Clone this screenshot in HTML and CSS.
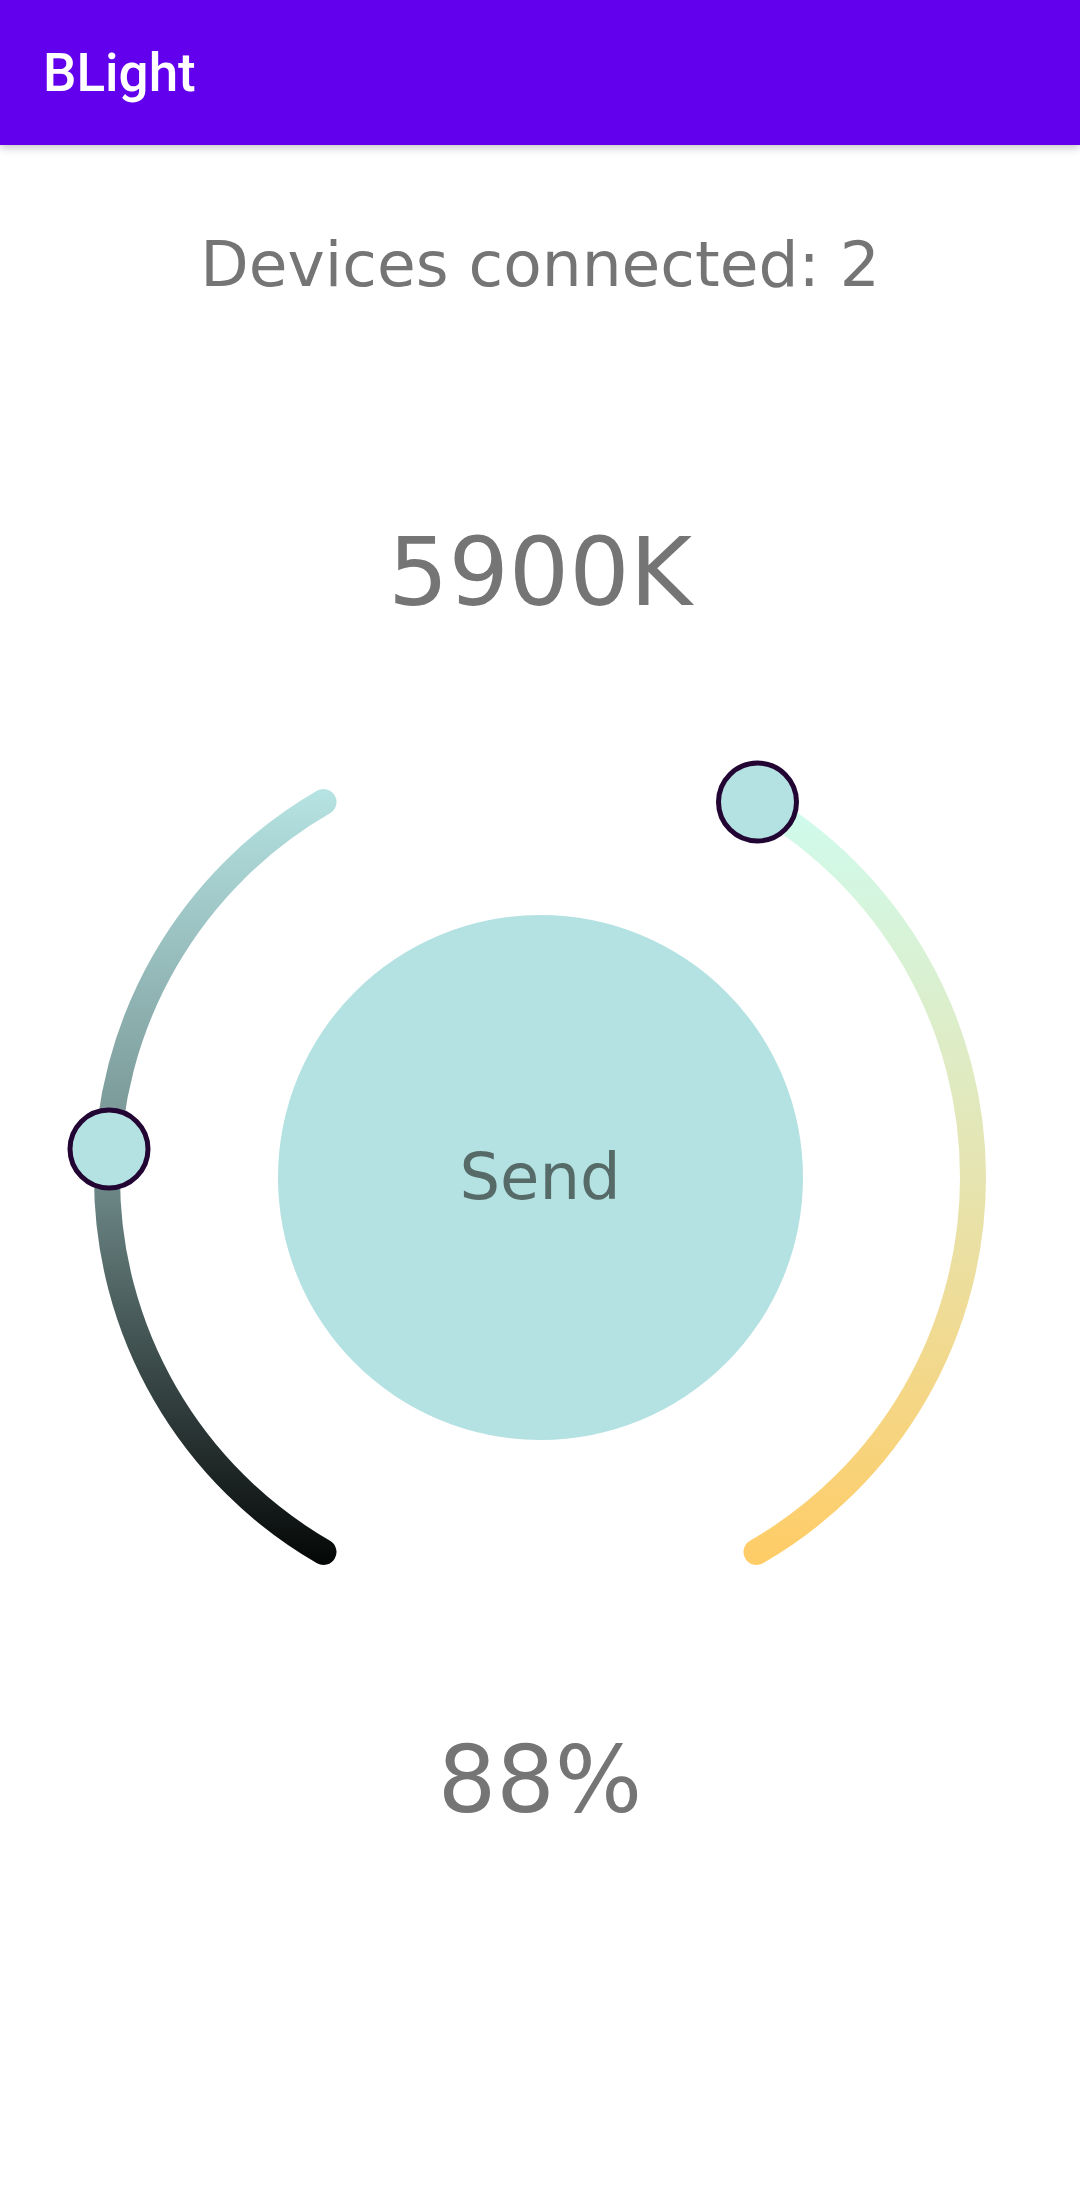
FILE: index.html
```html
<!DOCTYPE html>
<html lang="en">
<head>
<meta charset="utf-8">
<title>BLight</title>
<link rel="stylesheet" href="styles.css">
</head>
<body>
<header class="app-bar">
  <h1 class="app-title">BLight</h1>
</header>
<main class="content">
  <p class="devices">Devices connected: 2</p>
  <p class="temp">5900K</p>
  <div class="dial">
    <svg class="dial-svg" width="1080" height="880" viewBox="0 0 1080 880">
      <defs>
        <linearGradient id="gLeft" gradientUnits="userSpaceOnUse" x1="0" y1="52" x2="0" y2="828">
          <stop offset="0" stop-color="#b6e3e3"/>
          <stop offset="0.5" stop-color="#6f8b8a"/>
          <stop offset="1" stop-color="#040706"/>
        </linearGradient>
        <linearGradient id="gRight" gradientUnits="userSpaceOnUse" x1="0" y1="52" x2="0" y2="828">
          <stop offset="0" stop-color="#cefcf0"/>
          <stop offset="0.5" stop-color="#e6e4b0"/>
          <stop offset="1" stop-color="#ffcc66"/>
        </linearGradient>
      </defs>
      <path d="M 323.5 65 A 433 433 0 0 0 323.5 815" fill="none" stroke="url(#gLeft)" stroke-width="26" stroke-linecap="round"/>
      <path d="M 756.5 65 A 433 433 0 0 1 756.5 815" fill="none" stroke="url(#gRight)" stroke-width="26" stroke-linecap="round"/>
      <circle cx="109" cy="412" r="39" fill="#b4e1e2" stroke="#220533" stroke-width="5"/>
      <circle cx="757.5" cy="65" r="39" fill="#b4e1e2" stroke="#220533" stroke-width="5"/>
    </svg>
    <button class="send" type="button">Send</button>
  </div>
  <p class="brightness">88%</p>
</main>
</body>
</html>
```
FILE: styles.css
```css
html, body {
  margin: 0;
  padding: 0;
  background: #ffffff;
}

body {
  width: 1080px;
  min-height: 2208px;
  font-family: "DejaVu Sans", "Liberation Sans", sans-serif;
}

.app-bar {
  height: 145px;
  background: #6200ee;
  display: flex;
  align-items: center;
  padding-left: 43px;
  box-shadow: 0 3px 8px rgba(0, 0, 0, 0.22);
  position: relative;
  z-index: 1;
}

.app-title {
  margin: 0;
  padding-top: 2px;
  font-family: Roboto, "Noto Sans", sans-serif;
  font-weight: 500;
  font-size: 53px;
  line-height: 1;
  color: #ffffff;
}

.content {
  display: flex;
  flex-direction: column;
  align-items: center;
}

.devices {
  margin: 88px 0 0;
  font-size: 63px;
  line-height: 63px;
  color: #757575;
}

.temp {
  margin: 228px 0 0;
  font-size: 95px;
  line-height: 96px;
  color: #757575;
}

.dial {
  margin-top: 117px;
  width: 1080px;
  height: 880px;
  display: grid;
}

.dial-svg {
  grid-area: 1 / 1;
  display: block;
}

.send {
  grid-area: 1 / 1;
  place-self: center;
  width: 525px;
  height: 525px;
  border: none;
  border-radius: 50%;
  background: #b4e1e2;
  color: #566a68;
  font-family: "DejaVu Sans", "Liberation Sans", sans-serif;
  font-size: 64px;
  padding: 0;
  cursor: pointer;
}

.brightness {
  margin: 118px 0 0;
  font-size: 92px;
  line-height: 92px;
  color: #757575;
}
```
